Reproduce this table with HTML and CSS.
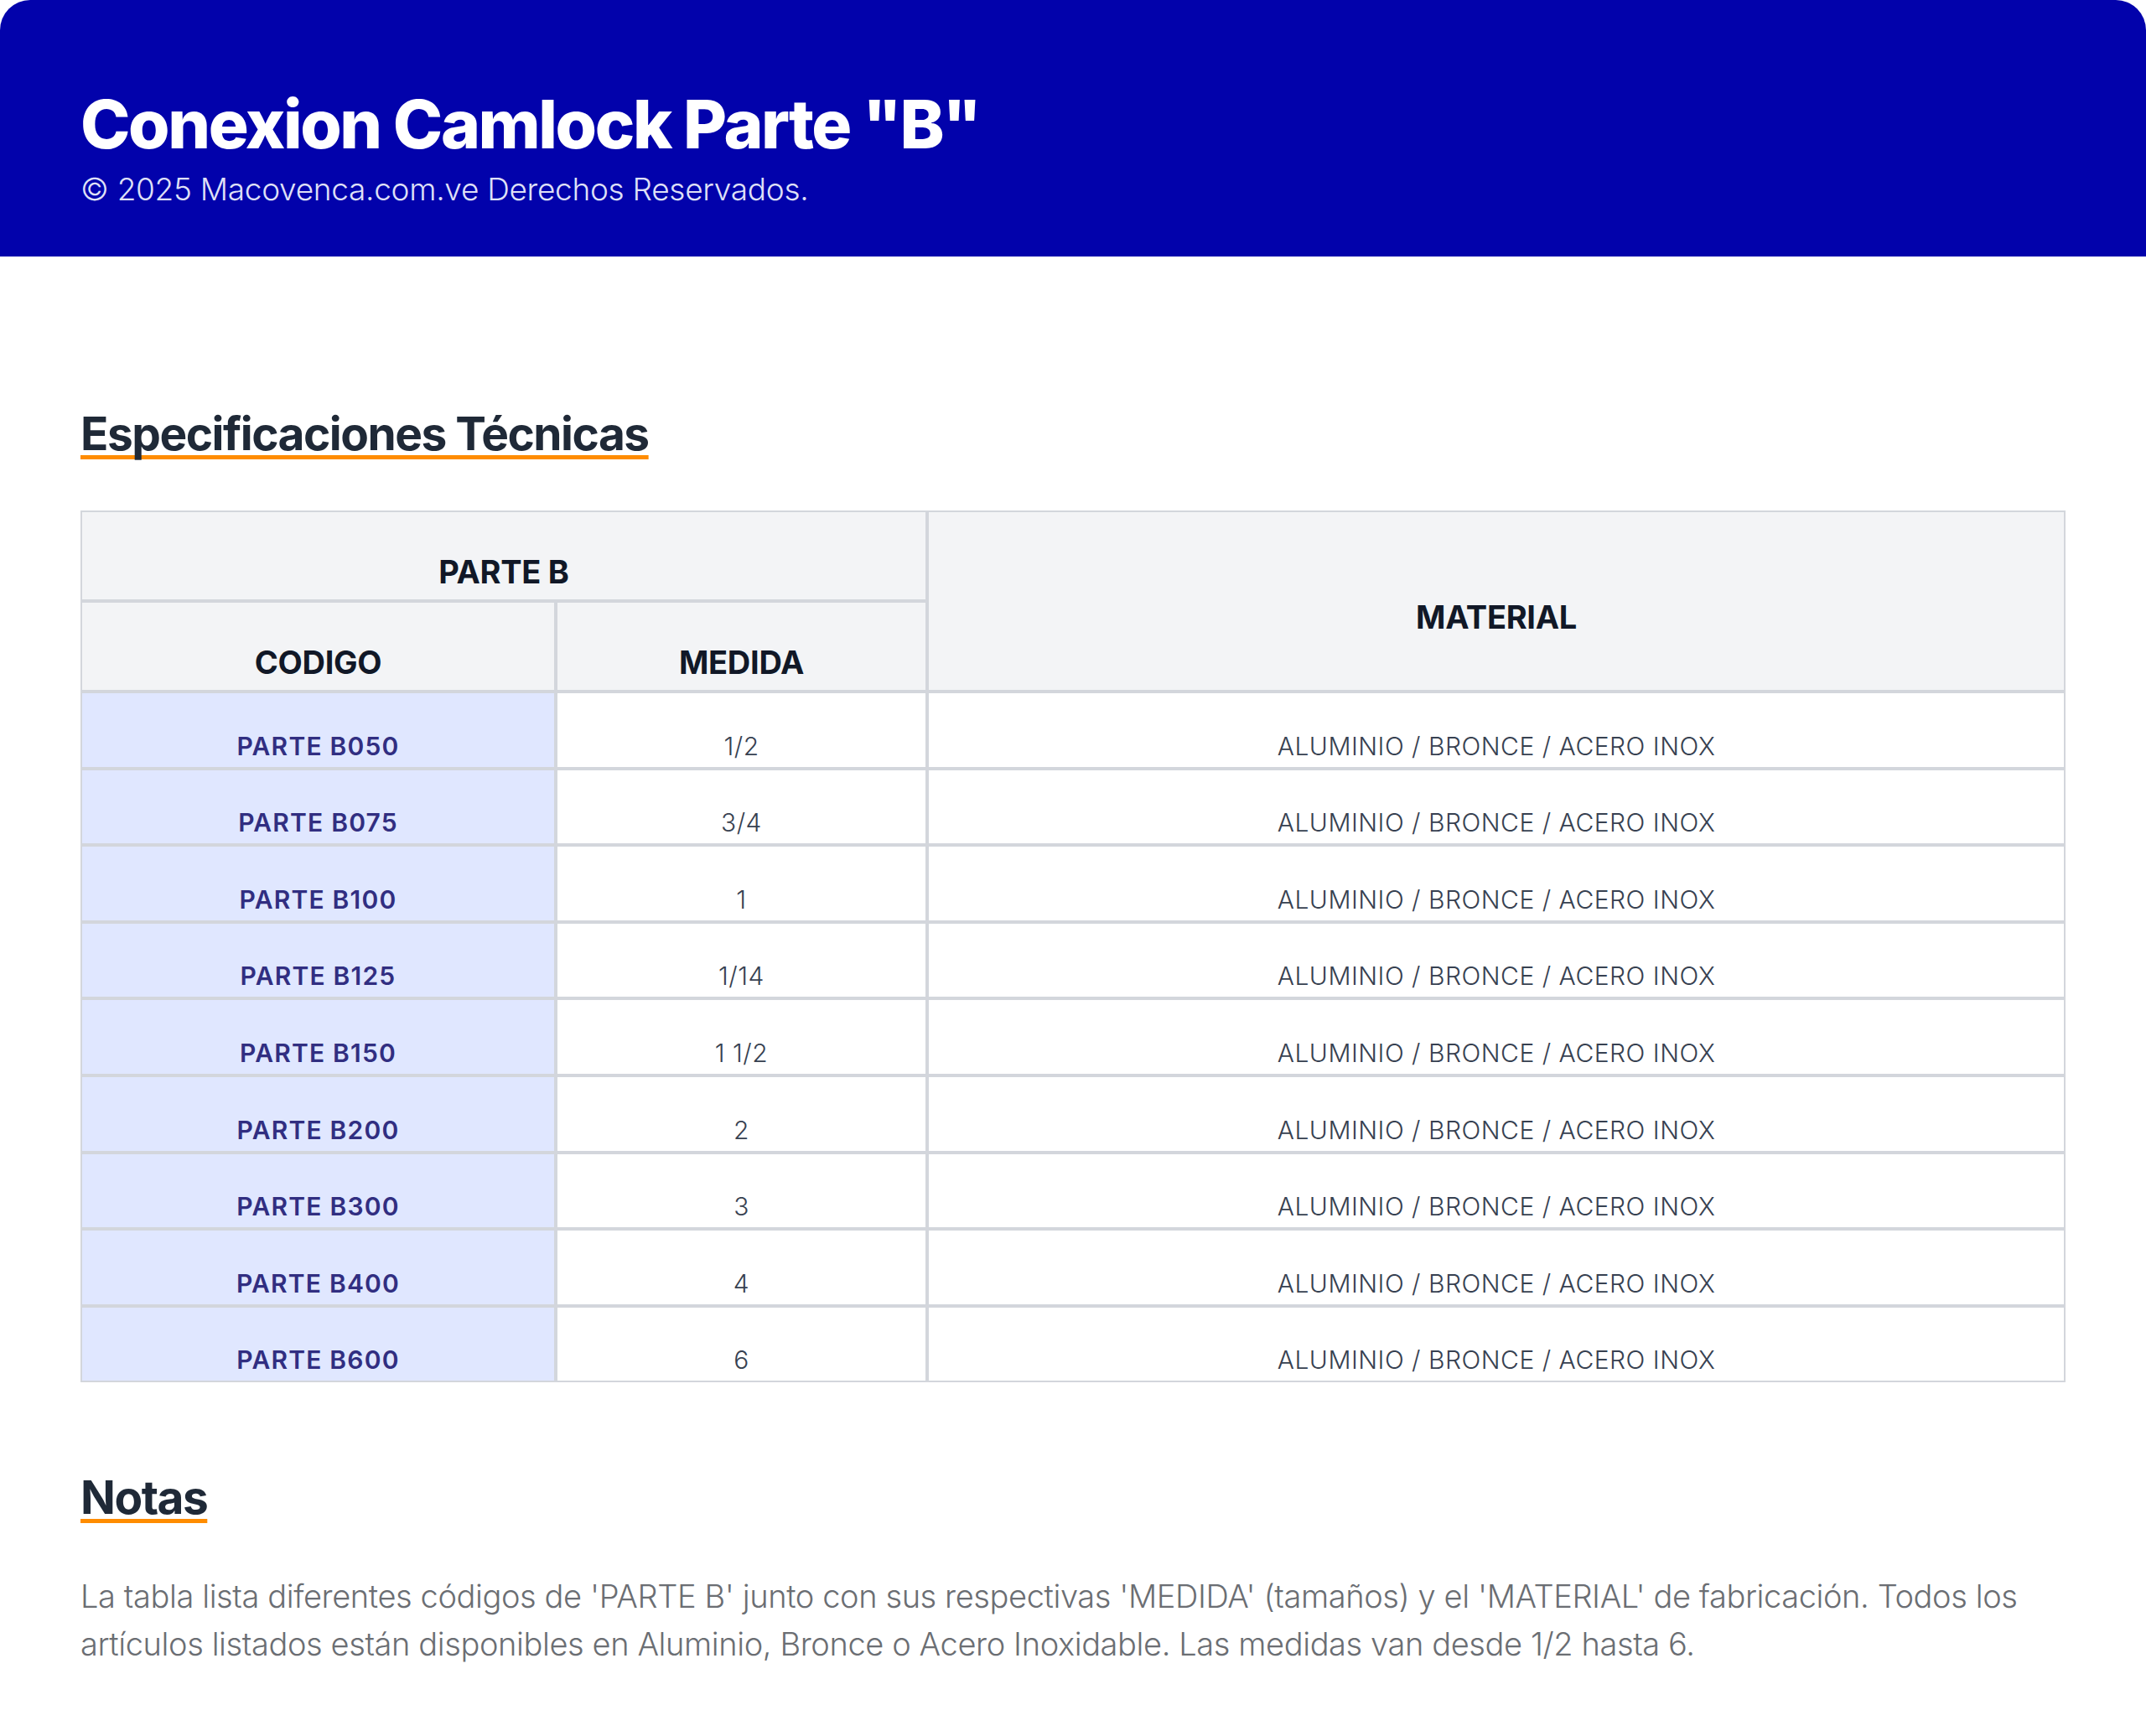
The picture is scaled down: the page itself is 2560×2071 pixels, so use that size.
FILE: index.html
```html
<!DOCTYPE html>
<html lang="es">
<head>
<meta charset="utf-8">
<title>Conexion Camlock Parte "B"</title>
<link rel="stylesheet" href="styles.css">
</head>
<body>
<header class="hero">
  <h1 class="hero-title">Conexion Camlock Parte "B"</h1>
  <p class="hero-sub">© 2025 Macovenca.com.ve Derechos Reservados.</p>
</header>
<main class="content">
  <h2 class="section-title specs-title">Especificaciones Técnicas</h2>
  <table class="spec-table">
    <colgroup>
      <col class="col-code">
      <col class="col-size">
      <col class="col-mat">
    </colgroup>
    <thead>
      <tr>
        <th colspan="2">PARTE B</th>
        <th rowspan="2" class="th-mat">MATERIAL</th>
      </tr>
      <tr>
        <th>CODIGO</th>
        <th>MEDIDA</th>
      </tr>
    </thead>
    <tbody>
      <tr><td class="code">PARTE B050</td><td>1/2</td><td>ALUMINIO / BRONCE / ACERO INOX</td></tr>
      <tr><td class="code">PARTE B075</td><td>3/4</td><td>ALUMINIO / BRONCE / ACERO INOX</td></tr>
      <tr><td class="code">PARTE B100</td><td>1</td><td>ALUMINIO / BRONCE / ACERO INOX</td></tr>
      <tr><td class="code">PARTE B125</td><td>1/14</td><td>ALUMINIO / BRONCE / ACERO INOX</td></tr>
      <tr><td class="code">PARTE B150</td><td>1 1/2</td><td>ALUMINIO / BRONCE / ACERO INOX</td></tr>
      <tr><td class="code">PARTE B200</td><td>2</td><td>ALUMINIO / BRONCE / ACERO INOX</td></tr>
      <tr><td class="code">PARTE B300</td><td>3</td><td>ALUMINIO / BRONCE / ACERO INOX</td></tr>
      <tr><td class="code">PARTE B400</td><td>4</td><td>ALUMINIO / BRONCE / ACERO INOX</td></tr>
      <tr><td class="code">PARTE B600</td><td>6</td><td>ALUMINIO / BRONCE / ACERO INOX</td></tr>
    </tbody>
  </table>
  <h2 class="section-title notes-title">Notas</h2>
  <p class="notes">La tabla lista diferentes códigos de 'PARTE B' junto con sus respectivas 'MEDIDA' (tamaños) y el 'MATERIAL' de fabricación. Todos los artículos listados están disponibles en Aluminio, Bronce o Acero Inoxidable. Las medidas van desde 1/2 hasta 6.</p>
</main>
</body>
</html>
```
FILE: styles.css
```css
* { box-sizing: border-box; }

html, body {
  margin: 0;
  padding: 0;
  background: #ffffff;
}

body {
  font-family: Inter, "Noto Sans", "Liberation Sans", sans-serif;
  color: #1f2937;
}

.hero {
  background: #0202ab;
  border-radius: 36px 36px 0 0;
  padding: 100px 96px 52px;
  height: 306px;
}

.hero-title {
  margin: 0;
  font-size: 80px;
  line-height: 96px;
  font-weight: 800;
  color: #ffffff;
  letter-spacing: -2.4px;
}

.hero-sub {
  margin: 2px 0 0;
  font-size: 37px;
  line-height: 55px;
  font-weight: 300;
  color: #dfe0f7;
  letter-spacing: -0.3px;
}

.content {
  padding: 0 96px 77px;
}

.section-title {
  margin: 0;
  font-size: 55px;
  line-height: 66px;
  font-weight: 700;
  color: #1f2937;
  display: inline-block;
  letter-spacing: -1.5px;
  text-decoration: underline;
  text-decoration-color: #ff8c00;
  text-decoration-thickness: 5px;
  text-underline-offset: 6px;
  text-decoration-skip-ink: none;
}

.specs-title {
  margin-top: 178px;
}

.spec-table {
  width: 100%;
  margin-top: 59px;
  border-collapse: separate;
  border-spacing: 0;
  table-layout: fixed;
}

.col-code { width: 567px; }
.col-size { width: 443px; }

.spec-table th,
.spec-table td {
  border: 2px solid #d3d6dc;
  text-align: center;
}

.spec-table th {
  background: #f3f4f6;
  color: #111827;
  font-size: 38px;
  line-height: 57px;
  font-weight: 700;
  padding: 43px 16px 4px;
  vertical-align: middle;
  letter-spacing: -0.3px;
}

.spec-table td {
  font-size: 30px;
  line-height: 45px;
  font-weight: 300;
  color: #374151;
  padding: 40.6px 16px 2px;
  vertical-align: middle;
  letter-spacing: 0.5px;
}

.spec-table td.code {
  background: #e0e7ff;
  color: #312e81;
  font-weight: 600;
  letter-spacing: 1.2px;
}

.notes-title {
  margin-top: 104px;
}

.notes {
  margin: 57px 0 0;
  font-size: 38px;
  line-height: 57px;
  font-weight: 300;
  color: #6b6e73;
  letter-spacing: -0.4px;
}
```
